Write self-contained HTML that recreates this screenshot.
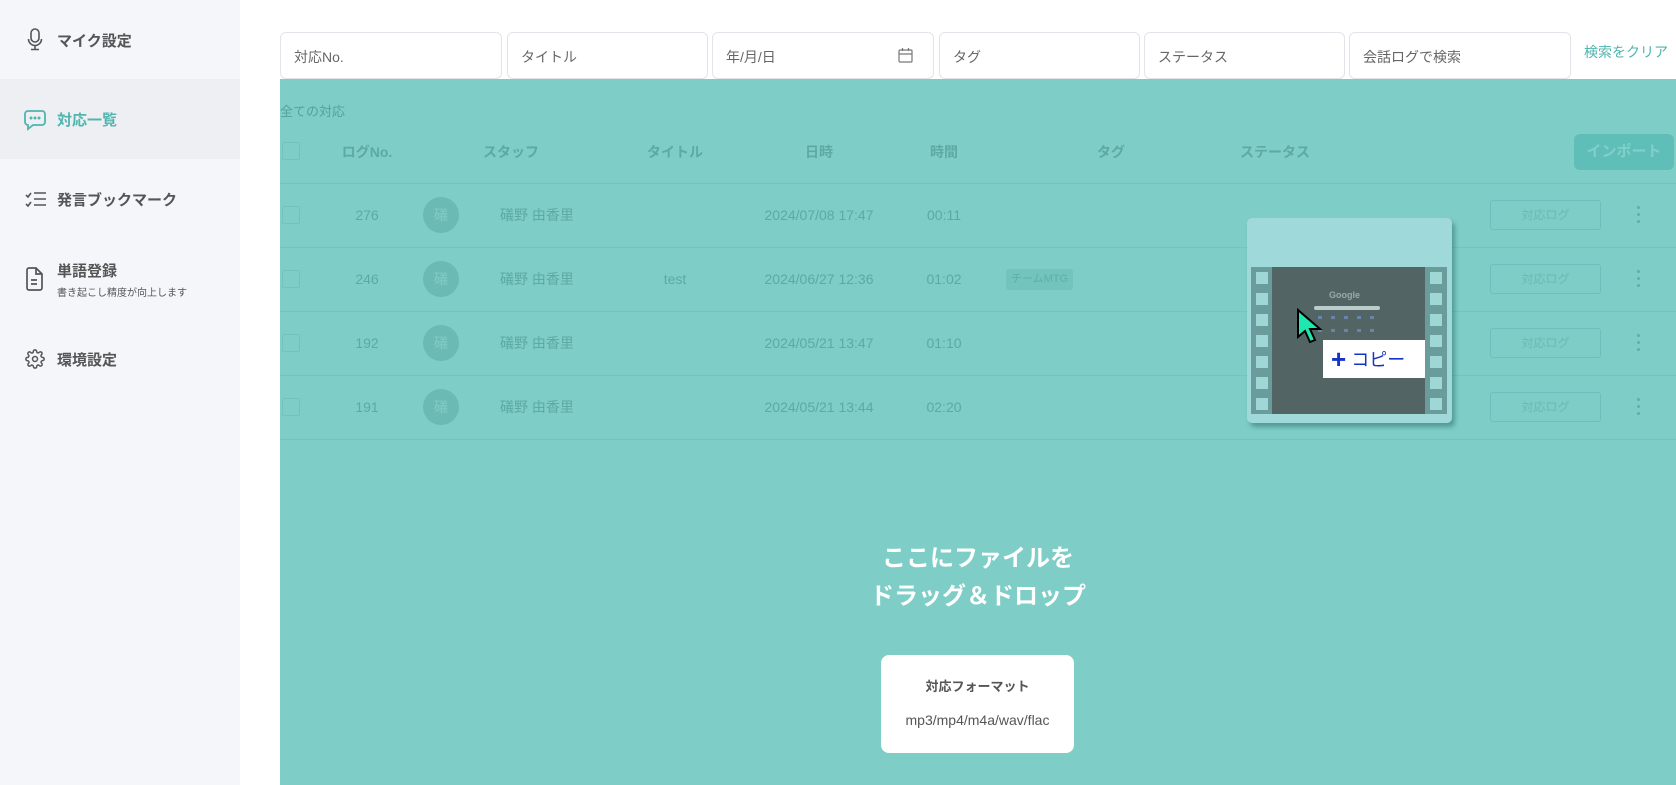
<!DOCTYPE html>
<html><head><meta charset="utf-8"><style>
*{margin:0;padding:0;box-sizing:border-box}
body{width:1676px;height:785px;overflow:hidden;background:#fff;font-family:"Liberation Sans","Noto Sans CJK JP",sans-serif;position:relative}
.a{position:absolute}
.side{left:0;top:0;width:240px;height:785px;background:#f5f6fa}
.nav{left:0;width:240px;font-size:15px;font-weight:bold;color:#555}
.nav span{position:absolute;left:57px}
.inp{top:32px;height:47px;border:1px solid #e3e4ea;border-radius:6px;background:#fff;font-size:14px;color:#666;padding:14px 0 0 13px}
.ov{left:280px;top:79px;width:1396px;height:706px;background:#7ecdc7}
.t{color:#5ea9a3;font-size:14px;white-space:nowrap}
.c{transform:translateX(-50%)}
.line{left:280px;width:1396px;height:1px;background:#74c3bd}
.av{width:36px;height:36px;border-radius:50%;background:#6bbab4;color:#82cbc5;font-size:14px;text-align:center;line-height:36px}
.btn{left:1490px;width:111px;height:30px;border:1px solid #6fc0ba;border-radius:3px;text-align:center;line-height:28px;font-size:12px;color:#6db9b3}
.dots{left:1637px;width:4px}
.dots i{display:block;width:3px;height:3px;background:#6aaaa5;border-radius:50%;margin-bottom:4px}
.cb{left:282px;width:18px;height:18px;border:1px solid #73c2bc;border-radius:2px}
</style></head><body>
<div class="a side"></div>
<div class="a" style="left:0;top:79px;width:240px;height:80px;background:#eeeff3"></div>
<div class="a nav" style="top:30px">
<svg class="a" style="left:27px;top:-2px" width="16" height="24" viewBox="0 0 16 24" fill="none" stroke="#555" stroke-width="1.6"><rect x="4" y="1" width="8" height="13" rx="4"/><path d="M1.5 11a6.5 6.5 0 0 0 13 0M8 17.5v4M4 21.5h8"/></svg>
<span>マイク設定</span></div>
<div class="a nav" style="top:109px;color:#4fb5ae">
<svg class="a" style="left:24px;top:0" width="22" height="22" viewBox="0 0 22 22" fill="none" stroke="#4fb5ae" stroke-width="1.8"><path d="M4 2h14a3 3 0 0 1 3 3v8a3 3 0 0 1-3 3H9l-5 4v-4a3 3 0 0 1-3-3V5a3 3 0 0 1 3-3z"/><circle cx="7" cy="9" r=".6" fill="#4fb5ae"/><circle cx="11" cy="9" r=".6" fill="#4fb5ae"/><circle cx="15" cy="9" r=".6" fill="#4fb5ae"/></svg>
<span>対応一覧</span></div>
<div class="a nav" style="top:189px">
<svg class="a" style="left:25px;top:1px" width="22" height="20" viewBox="0 0 22 20" fill="none" stroke="#555" stroke-width="1.6"><path d="M1 5l2 2 3-4M1 14l2 2 3-4M9 3h12M9 9h12M9 15h12"/></svg>
<span>発言ブックマーク</span></div>
<div class="a nav" style="top:260px">
<svg class="a" style="left:25px;top:7px" width="19" height="24" viewBox="0 0 19 24" fill="none" stroke="#555" stroke-width="1.7"><path d="M2 3a2 2 0 0 1 2-2h7l6 6v14a2 2 0 0 1-2 2H4a2 2 0 0 1-2-2z"/><path d="M11 1v6h6M6 13h6M6 17h6"/></svg>
<span>単語登録</span>
<span style="top:24px;font-size:10px;font-weight:normal;color:#555">書き起こし精度が向上します</span></div>
<div class="a nav" style="top:349px">
<svg class="a" style="left:25px;top:0" width="20" height="20" viewBox="0 0 24 24" fill="none" stroke="#555" stroke-width="1.8"><circle cx="12" cy="12" r="3"/><path d="M19.4 15a1.7 1.7 0 0 0 .3 1.8l.1.1a2 2 0 1 1-2.8 2.8l-.1-.1a1.7 1.7 0 0 0-1.8-.3 1.7 1.7 0 0 0-1 1.5V21a2 2 0 1 1-4 0v-.1A1.7 1.7 0 0 0 9 19.4a1.7 1.7 0 0 0-1.8.3l-.1.1a2 2 0 1 1-2.8-2.8l.1-.1a1.7 1.7 0 0 0 .3-1.8 1.7 1.7 0 0 0-1.5-1H3a2 2 0 1 1 0-4h.1A1.7 1.7 0 0 0 4.6 9a1.7 1.7 0 0 0-.3-1.8l-.1-.1a2 2 0 1 1 2.8-2.8l.1.1a1.7 1.7 0 0 0 1.8.3H9a1.7 1.7 0 0 0 1-1.5V3a2 2 0 1 1 4 0v.1a1.7 1.7 0 0 0 1 1.5 1.7 1.7 0 0 0 1.8-.3l.1-.1a2 2 0 1 1 2.8 2.8l-.1.1a1.7 1.7 0 0 0-.3 1.8V9a1.7 1.7 0 0 0 1.5 1H21a2 2 0 1 1 0 4h-.1a1.7 1.7 0 0 0-1.5 1z"/></svg>
<span>環境設定</span></div>

<div class="a inp" style="left:280px;width:222px">対応No.</div>
<div class="a inp" style="left:507px;width:201px">タイトル</div>
<div class="a inp" style="left:712px;width:222px">年/月/日
<svg class="a" style="left:185px;top:15px" width="15" height="15" viewBox="0 0 15 15" fill="none" stroke="#777" stroke-width="1.2"><rect x="1" y="2" width="13" height="12" rx="1"/><path d="M1 6h13M4.5 0v3M10.5 0v3"/></svg></div>
<div class="a inp" style="left:939px;width:201px">タグ</div>
<div class="a inp" style="left:1144px;width:201px">ステータス</div>
<div class="a inp" style="left:1349px;width:222px">会話ログで検索</div>
<div class="a" style="left:1584px;top:42px;font-size:14px;color:#4fb5ae">検索をクリア</div>

<div class="a ov"></div>
<div class="a t" style="left:280px;top:101px;font-size:13px;color:#55a19b">全ての対応</div>
<div class="a cb" style="top:142px"></div>
<div class="a t c" style="left:367px;top:142px;font-weight:bold">ログNo.</div>
<div class="a t c" style="left:511px;top:142px;font-weight:bold">スタッフ</div>
<div class="a t c" style="left:675px;top:142px;font-weight:bold">タイトル</div>
<div class="a t c" style="left:819px;top:142px;font-weight:bold">日時</div>
<div class="a t c" style="left:944px;top:142px;font-weight:bold">時間</div>
<div class="a t c" style="left:1111px;top:142px;font-weight:bold">タグ</div>
<div class="a t c" style="left:1275px;top:142px;font-weight:bold">ステータス</div>
<div class="a" style="left:1574px;top:134px;width:100px;height:36px;border-radius:6px;background:#5fbfb8;color:#7fd0ca;font-size:15px;text-align:center;line-height:36px;font-weight:bold">インポート</div>

<div class="a line" style="top:183px"></div>
<div class="a line" style="top:247px"></div>
<div class="a line" style="top:311px"></div>
<div class="a line" style="top:375px"></div>
<div class="a line" style="top:439px"></div>

<div class="a cb" style="top:206px"></div><div class="a t c" style="left:367px;top:207px">276</div><div class="a av" style="left:423px;top:197px">礒</div><div class="a t" style="left:500px;top:205px">礒野 由香里</div><div class="a t c" style="left:819px;top:207px">2024/07/08 17:47</div><div class="a t c" style="left:944px;top:207px">00:11</div><div class="a btn" style="top:200px">対応ログ</div><div class="a dots" style="top:206px"><i></i><i></i><i></i></div>
<div class="a cb" style="top:270px"></div><div class="a t c" style="left:367px;top:271px">246</div><div class="a av" style="left:423px;top:261px">礒</div><div class="a t" style="left:500px;top:269px">礒野 由香里</div><div class="a t c" style="left:675px;top:271px">test</div><div class="a t c" style="left:819px;top:271px">2024/06/27 12:36</div><div class="a t c" style="left:944px;top:271px">01:02</div><div class="a" style="left:1006px;top:269px;width:67px;height:21px;border-radius:3px;background:#74c4be;color:#62aca6;font-size:11px;text-align:center;line-height:21px">チームMTG</div><div class="a btn" style="top:264px">対応ログ</div><div class="a dots" style="top:270px"><i></i><i></i><i></i></div>
<div class="a cb" style="top:334px"></div><div class="a t c" style="left:367px;top:335px">192</div><div class="a av" style="left:423px;top:325px">礒</div><div class="a t" style="left:500px;top:333px">礒野 由香里</div><div class="a t c" style="left:819px;top:335px">2024/05/21 13:47</div><div class="a t c" style="left:944px;top:335px">01:10</div><div class="a btn" style="top:328px">対応ログ</div><div class="a dots" style="top:334px"><i></i><i></i><i></i></div>
<div class="a cb" style="top:398px"></div><div class="a t c" style="left:367px;top:399px">191</div><div class="a av" style="left:423px;top:389px">礒</div><div class="a t" style="left:500px;top:397px">礒野 由香里</div><div class="a t c" style="left:819px;top:399px">2024/05/21 13:44</div><div class="a t c" style="left:944px;top:399px">02:20</div><div class="a btn" style="top:392px">対応ログ</div><div class="a dots" style="top:398px"><i></i><i></i><i></i></div>

<div class="a" style="left:1247px;top:218px;width:205px;height:205px;background:#a0d9d9;border-radius:5px;box-shadow:3px 4px 5px rgba(0,60,60,.35)"></div>
<div class="a" style="left:1251px;top:267px;width:196px;height:147px;background:#6a9c9c"></div>
<div class="a" style="left:1272px;top:267px;width:153px;height:147px;background:#526464"></div>
<div class="a" style="left:1256px;top:272px;width:12px;height:140px;background:repeating-linear-gradient(#9fd6d6 0 12px,transparent 12px 21px)"></div>
<div class="a" style="left:1430px;top:272px;width:12px;height:140px;background:repeating-linear-gradient(#9fd6d6 0 12px,transparent 12px 21px)"></div>
<div class="a" style="left:1329px;top:290px;font-size:9px;color:#9aa;font-weight:bold">Google</div>
<div class="a" style="left:1314px;top:306px;width:66px;height:4px;background:#bcc;border-radius:2px"></div>
<div class="a" style="left:1318px;top:316px;width:60px;height:3px;background:repeating-linear-gradient(90deg,#6a85a8 0 4px,transparent 4px 13px)"></div>
<div class="a" style="left:1318px;top:329px;width:60px;height:3px;background:repeating-linear-gradient(90deg,#6a85a8 0 4px,transparent 4px 13px)"></div>
<svg class="a" style="left:1296px;top:308px" width="30" height="40" viewBox="0 0 30 40"><path d="M2 2l0 27 7-6 5 11 5-2-5-11 10 0z" fill="#1ee8b0" stroke="#000" stroke-width="2"/></svg>
<div class="a" style="left:1323px;top:340px;width:102px;height:38px;background:#fff;color:#1533c4;font-size:18px;line-height:38px;padding-left:8px"><span style="font-size:26px;font-weight:bold;vertical-align:-2px">+</span> コピー</div>

<div class="a" style="left:978px;top:540px;transform:translateX(-50%);text-align:center;color:#fff;font-size:24px;font-weight:bold;line-height:38px;white-space:nowrap">ここにファイルを<br>ドラッグ＆ドロップ</div>
<div class="a" style="left:881px;top:655px;width:193px;height:98px;background:#fff;border-radius:8px;text-align:center">
<div style="margin-top:21px;font-size:13px;font-weight:bold;color:#555">対応フォーマット</div>
<div style="margin-top:17px;font-size:14px;color:#555">mp3/mp4/m4a/wav/flac</div></div>
</body></html>
